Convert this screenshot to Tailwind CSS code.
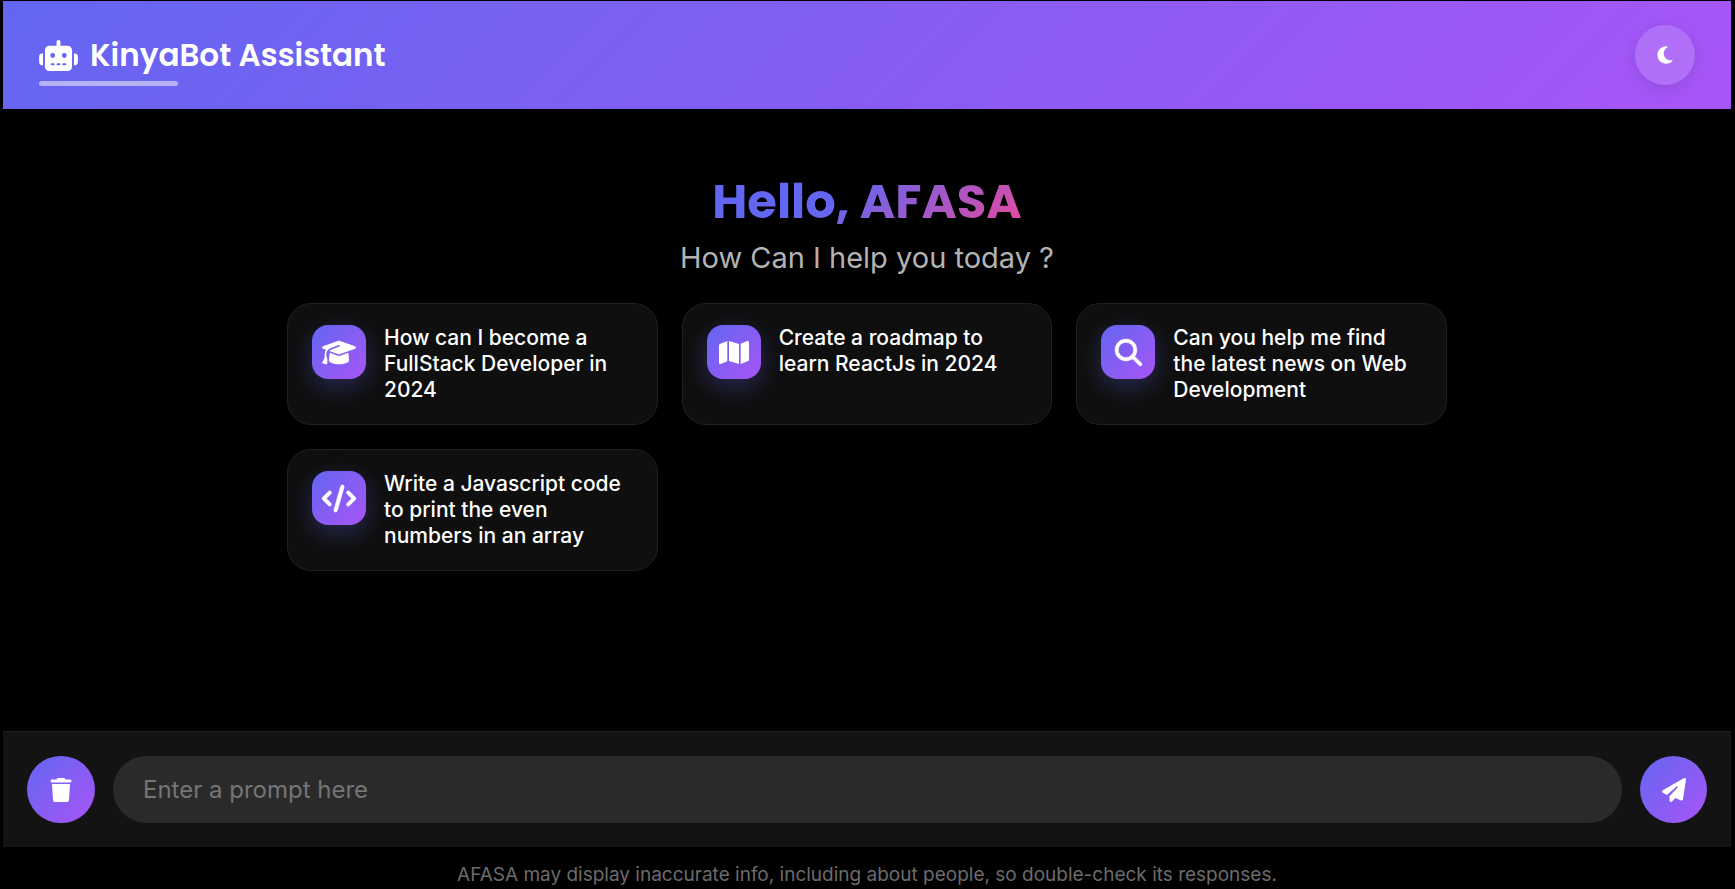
<!DOCTYPE html>
<html lang="en">
<head>
<meta charset="utf-8">
<meta name="viewport" content="width=device-width, initial-scale=1">
<title>KinyaBot Assistant</title>
<script src="https://cdn.jsdelivr.net/npm/@tailwindcss/browser@4"></script>
</head>
<body class="flex min-h-screen flex-col bg-black pt-px pr-1 pl-[3px] font-['Inter',sans-serif] text-white">
<header class="flex h-[108px] items-center justify-between bg-linear-[135deg,#6366f1,#a855f7] px-9">
  <h1 class="relative flex items-center gap-3 font-['Poppins','Inter',sans-serif] text-[31px] leading-[46px] font-semibold">
    <svg class="h-[31px] w-[39px] fill-white" viewBox="0 0 640 512" aria-hidden="true"><path d="M320 0c17.700 0 32 14.300 32 32V96H472c39.800 0 72 32.200 72 72V440c0 39.800-32.200 72-72 72H168c-39.800 0-72-32.200-72-72V168c0-39.800 32.200-72 72-72H288V32c0-17.700 14.300-32 32-32zM208 384c-8.800 0-16 7.200-16 16s7.200 16 16 16h32c8.800 0 16-7.200 16-16s-7.200-16-16-16H208zm96 0c-8.800 0-16 7.200-16 16s7.200 16 16 16h32c8.800 0 16-7.200 16-16s-7.200-16-16-16H304zm96 0c-8.800 0-16 7.200-16 16s7.200 16 16 16h32c8.800 0 16-7.200 16-16s-7.200-16-16-16H400zM264 256a40 40 0 1 0-80 0 40 40 0 1 0 80 0zm152 40a40 40 0 1 0 0-80 40 40 0 1 0 0 80zM48 224H64V416H48c-26.500 0-48-21.500-48-48V272c0-26.500 21.500-48 48-48zm544 0c26.500 0 48 21.500 48 48v96c0 26.500-21.500 48-48 48H576V224h16z"/></svg>
    <span>KinyaBot Assistant</span>
    <span class="absolute -bottom-2 left-0 h-[5px] w-2/5 rounded-full bg-white/50"></span>
  </h1>
  <button type="button" aria-label="Toggle theme" class="flex size-[60px] items-center justify-center rounded-full bg-white/15 shadow-[0_4px_16px_rgba(0,0,0,0.1)]">
    <svg class="h-5 w-4 fill-white" viewBox="0 0 384 512" aria-hidden="true"><path d="M223.500 32C100 32 0 132.300 0 256S100 480 223.500 480c60.600 0 115.500-24.200 155.800-63.400c5-4.900 6.300-12.500 3.100-18.700s-10.100-9.700-17-8.500c-9.800 1.700-19.800 2.600-30.100 2.600c-96.900 0-175.500-78.800-175.500-176c0-65.800 36-123.100 89.300-153.300c6.100-3.500 9.200-10.500 7.700-17.300s-7.300-11.900-14.300-12.500c-6.300-.5-12.600-.8-19-.8z"/></svg>
  </button>
</header>

<main class="mx-auto flex w-full max-w-[1160px] grow flex-col pt-[57px]">
  <h2 class="mx-auto bg-linear-[135deg,#6366f1_40%,#ec4899] bg-clip-text font-['Poppins','Inter',sans-serif] text-5xl leading-[72px] font-bold text-transparent">Hello, AFASA</h2>
  <p class="mb-[25px] text-center text-[29px] leading-10 text-[#b3b3b3]">How Can I help you today ?</p>
  <ul class="grid grid-cols-3 gap-6 text-[21px] leading-[26px] font-medium">
    <li><button type="button" class="flex h-full w-full items-start gap-[18px] rounded-3xl border border-[#202020] bg-[#0f0f0f] px-6 py-[21px] text-left">
      <span class="flex size-[54px] shrink-0 items-center justify-center rounded-2xl bg-linear-[135deg,#6366f1,#a855f7] shadow-[0_8px_24px_rgba(99,102,241,0.3)]"><svg class="h-[27px] w-[34px] fill-white" viewBox="0 0 640 512" aria-hidden="true"><path d="M320 32c-8.100 0-16.100 1.400-23.700 4.100L15.800 137.400C6.300 140.900 0 149.900 0 160s6.300 19.100 15.800 22.600l57.900 20.900C57.300 229.300 48 259.800 48 291.900v28.100c0 28.400-10.800 57.700-22.300 80.800c-6.500 13-13.900 25.800-22.500 37.600C0 442.700-.9 448.300 .9 453.400s6 8.900 11.200 10.200l64 16c4.200 1.100 8.700 .3 12.400-2s6.300-6.100 7.100-10.400c8.600-42.800 4.300-81.200-2.100-108.700C90.300 344.300 86 329.800 80 316.500V291.900c0-30.200 10.200-58.700 27.900-81.500c12.900-15.500 29.600-28 49.200-35.700l157-61.700c8.200-3.200 17.500 .8 20.700 9s-.8 17.500-9 20.700l-157 61.700c-12.400 4.900-23.300 12.400-32.200 21.600l159.600 57.600c7.600 2.700 15.600 4.100 23.700 4.100s16.100-1.400 23.700-4.100L624.200 182.600c9.500-3.400 15.800-12.500 15.800-22.600s-6.300-19.100-15.800-22.600L343.700 36.100C336.100 33.400 328.100 32 320 32zM128 408c0 35.300 86 72 192 72s192-36.700 192-72L496.700 262.600 354.500 314c-11.100 4-22.800 6-34.500 6s-23.500-2-34.500-6L143.300 262.600 128 408z"/></svg></span>
      <span>How can I become a FullStack Developer in 2024</span>
    </button></li>
    <li><button type="button" class="flex h-full w-full items-start gap-[18px] rounded-3xl border border-[#202020] bg-[#0f0f0f] px-6 py-[21px] text-left">
      <span class="flex size-[54px] shrink-0 items-center justify-center rounded-2xl bg-linear-[135deg,#6366f1,#a855f7] shadow-[0_8px_24px_rgba(99,102,241,0.3)]"><svg class="h-[27px] w-[30px] fill-white" viewBox="0 0 576 512" aria-hidden="true"><path d="M384 476.100L192 421.200V35.900L384 90.800V476.100zm32-1.200V88.400L543.100 37.500c15.800-6.300 32.900 5.300 32.900 22.300V394.600c0 9.800-6 18.600-15.100 22.300L416 474.800zM15.100 95.100L160 37.200V423.600L32.900 474.500C17.100 480.800 0 469.200 0 452.200V117.400c0-9.800 6-18.600 15.100-22.300z"/></svg></span>
      <span>Create a roadmap to learn ReactJs in 2024</span>
    </button></li>
    <li><button type="button" class="flex h-full w-full items-start gap-[18px] rounded-3xl border border-[#202020] bg-[#0f0f0f] px-6 py-[21px] text-left">
      <span class="flex size-[54px] shrink-0 items-center justify-center rounded-2xl bg-linear-[135deg,#6366f1,#a855f7] shadow-[0_8px_24px_rgba(99,102,241,0.3)]"><svg class="size-[27px] overflow-visible fill-white stroke-white stroke-8" viewBox="0 0 512 512" aria-hidden="true"><path d="M416 208c0 45.900-14.900 88.300-40 122.700L502.600 457.400c12.500 12.500 12.500 32.800 0 45.300s-32.800 12.500-45.300 0L330.700 376c-34.400 25.200-76.800 40-122.700 40C93.100 416 0 322.900 0 208S93.100 0 208 0S416 93.100 416 208zM208 352a144 144 0 1 0 0-288 144 144 0 1 0 0 288z"/></svg></span>
      <span>Can you help me find the latest news on Web Development</span>
    </button></li>
    <li><button type="button" class="flex h-full w-full items-start gap-[18px] rounded-3xl border border-[#202020] bg-[#0f0f0f] px-6 py-[21px] text-left">
      <span class="flex size-[54px] shrink-0 items-center justify-center rounded-2xl bg-linear-[135deg,#6366f1,#a855f7] shadow-[0_8px_24px_rgba(99,102,241,0.3)]"><svg class="h-[27px] w-[34px] overflow-visible fill-white stroke-white stroke-[14px]" viewBox="0 0 640 512" aria-hidden="true"><path d="M392.800 1.200c-17-4.900-34.700 5-39.600 22l-128 448c-4.900 17 5 34.700 22 39.600s34.700-5 39.600-22l128-448c4.900-17-5-34.700-22-39.600zm80.600 120.100c-12.500 12.500-12.500 32.800 0 45.300L562.700 256l-89.400 89.400c-12.500 12.500-12.500 32.800 0 45.300s32.800 12.500 45.300 0l112-112c12.500-12.500 12.500-32.800 0-45.300l-112-112c-12.500-12.500-32.800-12.500-45.300 0zm-306.700 0c-12.500-12.500-32.800-12.500-45.300 0l-112 112c-12.500 12.500-12.500 32.800 0 45.300l112 112c12.500 12.500 32.800 12.500 45.300 0s12.500-32.800 0-45.300L77.300 256l89.400-89.400c12.500-12.500 12.500-32.800 0-45.300z"/></svg></span>
      <span>Write a Javascript code to print the even numbers in an array</span>
    </button></li>
  </ul>
</main>

<footer>
  <form class="flex items-center gap-[18px] border-t border-[#202020] bg-[#131313] p-6">
    <button type="button" aria-label="Delete chat" class="flex h-[67px] w-[68px] shrink-0 items-center justify-center rounded-full bg-linear-[135deg,#6366f1,#a855f7]"><svg class="h-6 w-[22px] fill-white" viewBox="0 0 448 512" aria-hidden="true"><path d="M135.200 17.700L128 32H32C14.300 32 0 46.300 0 64S14.300 96 32 96H416c17.700 0 32-14.300 32-32s-14.300-32-32-32H320l-7.200-14.300C307.400 6.800 296.300 0 284.200 0H163.800c-12.100 0-23.200 6.800-28.600 17.700zM416 128H32L53.200 467c1.600 25.300 22.600 45 47.900 45H346.900c25.300 0 46.300-19.700 47.900-45L416 128z"/></svg></button>
    <input type="text" aria-label="Prompt" placeholder="Enter a prompt here" class="h-[67px] min-w-0 grow rounded-full bg-[#2a2a2a] px-[30px] text-2xl placeholder:text-[#757575]">
    <button type="submit" aria-label="Send" class="flex size-[67px] shrink-0 items-center justify-center rounded-full bg-linear-[135deg,#6366f1,#a855f7]"><svg class="size-6 fill-white" viewBox="0 0 512 512" aria-hidden="true"><path d="M498.100 5.600c10.100 7 15.400 19.100 13.500 31.200l-64 416c-1.500 9.700-7.400 18.200-16 23s-18.900 5.400-28 1.600L284 427.700l-68.500 74.100c-8.900 9.700-22.900 12.900-35.200 8.100S160 493.200 160 480V396.400c0-4 1.500-7.800 4.200-10.700L331.800 202.800c5.800-6.300 5.600-16-.4-22s-15.700-6.400-22-.7L106 360.800 17.700 316.600C7.100 311.300 .3 300.700 0 288.900s5.900-22.800 16.100-28.700l448-256c10.700-6.100 23.900-5.500 34 1.400z"/></svg></button>
  </form>
  <p class="pt-[15px] pb-px text-center text-[19px] leading-[26px] text-[#6b6b6b]">AFASA may display inaccurate info, including about people, so double-check its responses.</p>
</footer>
</body>
</html>
